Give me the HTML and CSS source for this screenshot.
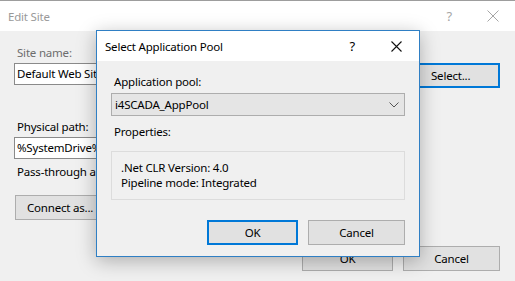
FILE: index.html
```html
<!DOCTYPE html>
<html>
<head>
<meta charset="utf-8">
<link rel="stylesheet" href="styles.css">
</head>
<body>
<div class="win">
  <div class="titlebar">
    <span class="title">Edit Site</span>
    <span class="help">?</span>
    <svg class="close" width="12" height="12" viewBox="0 0 12 12"><path d="M0.5 0.5 L11.5 11.5 M11.5 0.5 L0.5 11.5" stroke="#a6a6a6" stroke-width="1" fill="none"/></svg>
  </div>
  <div class="body">
    <div class="lbl dis lbl1">Site name:</div>
    <div class="row1">
      <div class="tb">Default Web Site</div>
      <div class="btn focus sel">Select...</div>
    </div>
    <div class="lbl lbl2">Physical path:</div>
    <div class="tb tb2">%SystemDrive%\inetpub\wwwroot</div>
    <div class="lbl lbl3">Pass-through authentication</div>
    <div class="btn connect">Connect as...</div>
    <div class="foot">
      <div class="btn okb">OK</div>
      <div class="btn cancelb">Cancel</div>
    </div>
  </div>

  <div class="dialog">
    <div class="dtitle">
      <span class="title2">Select Application Pool</span>
      <span class="help2">?</span>
      <svg class="close2" width="11" height="11" viewBox="0 0 11 11"><path d="M0.5 0.5 L10.5 10.5 M10.5 0.5 L0.5 10.5" stroke="#111" stroke-width="1.1" fill="none"/></svg>
    </div>
    <div class="dbody">
      <div class="lbl dl1">Application pool:</div>
      <div class="combo">
        <span>i4SCADA_AppPool</span>
        <svg width="10" height="6" viewBox="0 0 10 6"><polyline points="0.5,0.5 5,5 9.5,0.5" stroke="#555" stroke-width="1" fill="none"/></svg>
      </div>
      <div class="lbl dl2">Properties:</div>
      <div class="props">
        <div>.Net CLR Version: 4.0</div>
        <div>Pipeline mode: Integrated</div>
      </div>
      <div class="dfoot">
        <div class="btn focus dok">OK</div>
        <div class="btn dcancel">Cancel</div>
      </div>
    </div>
  </div>
</div>
</body>
</html>
```

FILE: styles.css
```css
html, body {
  margin: 0;
  padding: 0;
}
body {
  width: 515px;
  height: 281px;
  overflow: hidden;
  font-family: "Noto Sans", "Open Sans", sans-serif;
  font-size: 11.5px;
  letter-spacing: -0.2px;
  color: #000;
  background: #f0f0f0;
}
.win {
  position: relative;
  width: 515px;
  height: 281px;
  background: #f0f0f0;
  border-top: 1px solid #9d9d9d;
  box-sizing: border-box;
}
.titlebar {
  height: 30px;
  background: #fff;
  display: flex;
  align-items: center;
  padding-left: 8px;
}
.title {
  color: #999;
  flex: 1;
}
.help {
  color: #a6a6a6;
  font-size: 13px;
  margin-right: 35px;
}
.close {
  margin-right: 16px;
}
.body {
  padding: 0 15px 0 14px;
  display: flex;
  flex-direction: column;
}
.lbl {
  line-height: 16px;
  height: 16px;
  padding-left: 3px;
  white-space: nowrap;
}
.dis {
  color: #6d6d6d;
}
.lbl1 { margin-top: 14px; }
.row1 {
  margin-top: 2px;
  display: flex;
  align-items: flex-start;
}
.tb {
  width: 380px;
  height: 22px;
  box-sizing: border-box;
  border: 1px solid #8a8a8a;
  background: #fff;
  line-height: 20px;
  padding-left: 2px;
  white-space: nowrap;
  overflow: hidden;
}
.btn {
  height: 25px;
  box-sizing: border-box;
  border: 1px solid #adadad;
  background: #e1e1e1;
  display: flex;
  align-items: center;
  justify-content: center;
  white-space: nowrap;
}
.focus {
  border: 2px solid #0078d7;
}
.sel {
  margin-left: auto;
  width: 82px;
  justify-content: flex-start;
  padding-left: 11px;
}
.lbl2 { margin-top: 31px; }
.tb2 { margin-top: 2px; }
.lbl3 {
  margin-top: 5px;
  width: 84px;
  overflow: hidden;
}
.connect {
  margin-top: 15px;
  width: 100px;
  margin-left: 1px;
  justify-content: flex-start;
  padding-left: 11px;
}
.foot {
  margin-top: 26px;
  display: flex;
  justify-content: flex-end;
  gap: 10px;
}
.okb { width: 91px; }
.cancelb { width: 97px; }

.dialog {
  position: absolute;
  left: 96px;
  top: 29px;
  width: 324px;
  height: 227px;
  box-sizing: border-box;
  border: 1px solid #2f7fc4;
  background: #f0f0f0;
  box-shadow: 0 4px 18px rgba(0, 0, 0, 0.28);
}
.dtitle {
  height: 30px;
  background: #fff;
  display: flex;
  align-items: center;
  padding-left: 8px;
}
.title2 {
  flex: 1;
  white-space: nowrap;
}
.help2 {
  font-size: 13px;
  margin-right: 36px;
}
.close2 {
  margin-right: 17px;
}
.dbody {
  padding: 0 14px;
  display: flex;
  flex-direction: column;
}
.dl1 { margin-top: 13px; }
.combo {
  margin-top: 3px;
  height: 23px;
  box-sizing: border-box;
  border: 1px solid #adadad;
  background: #e5e5e5;
  display: flex;
  align-items: center;
  justify-content: space-between;
  padding: 0 5px 0 3px;
}
.dl2 { margin-top: 8px; }
.props {
  margin-top: 11px;
  height: 49px;
  box-sizing: border-box;
  border: 1px solid #dcdcdc;
  padding: 8px 0 0 9px;
  line-height: 15px;
}
.dfoot {
  margin-top: 20px;
  display: flex;
  justify-content: flex-end;
  gap: 10px;
}
.dok { width: 91px; }
.dcancel { width: 97px; }
```
